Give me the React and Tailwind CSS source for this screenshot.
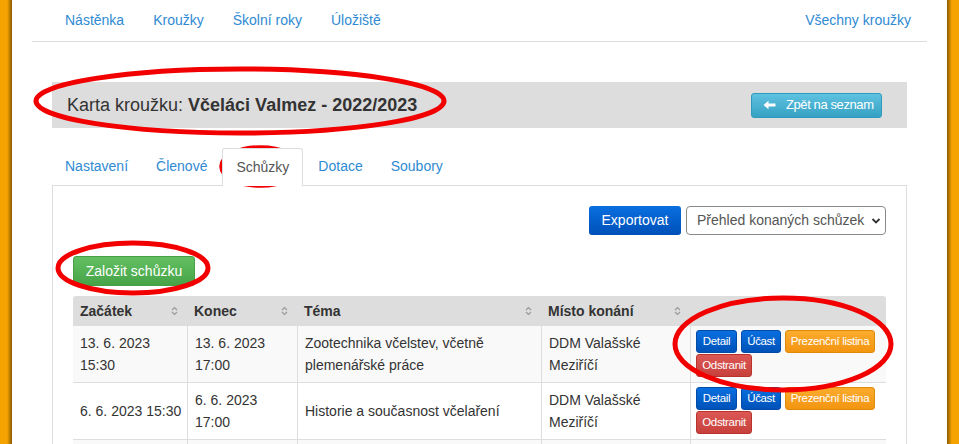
import React from "react";

const Sort = () => (
  <svg width="7" height="10" viewBox="0 0 7 10" className="shrink-0">
    <path d="M1 4 L3.5 1.5 L6 4" fill="none" stroke="#9a9a9a" strokeWidth="1.2" />
    <path d="M1 6 L3.5 8.5 L6 6" fill="none" stroke="#9a9a9a" strokeWidth="1.2" />
  </svg>
);

const XBtn = ({ children, kind, w }) => {
  const cls = {
    blue: "bg-gradient-to-b from-[#0a6fe0] to-[#0052b8] border-[#004aa8]",
    orange: "bg-gradient-to-b from-[#fbab2c] to-[#f3950f] border-[#e08a0a]",
    red: "bg-gradient-to-b from-[#dc5854] to-[#c7403c] border-[#b8322e]",
  }[kind];
  return (
    <span className={`inline-flex items-center justify-center h-[23px] ${w} rounded-[3px] border text-white text-[11.5px] tracking-[-0.35px] leading-none ${cls}`}>
      {children}
    </span>
  );
};

const Actions = () => (
  <div className="flex flex-wrap gap-x-[4px] gap-y-[1px] pt-[4px] pb-[4px] px-[5px]">
    <XBtn kind="blue" w="w-[41px]">Detail</XBtn>
    <XBtn kind="blue" w="w-[40px]">Účast</XBtn>
    <XBtn kind="orange" w="w-[90px]">Prezenční listina</XBtn>
    <XBtn kind="red" w="w-[56px]">Odstranit</XBtn>
  </div>
);

export default function App() {
  const rows = [
    ["13. 6. 2023 15:30", "13. 6. 2023 17:00", "Zootechnika včelstev, včetně plemenářské práce", "DDM Valašské Meziříčí"],
    ["6. 6. 2023 15:30", "6. 6. 2023 17:00", "Historie a současnost včelaření", "DDM Valašské Meziříčí"],
    ["30. 5. 2023 15:30", "30. 5. 2023 17:00", "Ošetřování včelstev", "DDM Valašské Meziříčí"],
  ];
  const widths = ["w-[114px]", "w-[110px]", "w-[244px]", "w-[149px]", "w-[196px]"];
  return (
    <div className="relative flex w-[959px] h-[444px] overflow-hidden bg-white text-[14px] text-[#333]" style={{ fontFamily: '"Liberation Sans", Arial, sans-serif' }}>
      <div className="w-[12px] shrink-0 bg-gradient-to-r from-[#f5a300] from-60% to-[#8a5a00]" />
      <div className="flex-1 px-[20px]">
        {/* nav */}
        <div className="h-[42px] border-b border-[#dcdcdc] flex items-center justify-between pl-[33px] pr-[16px] pb-[1px]">
          <div className="flex gap-[29px] text-[#2f8ad3]">
            <span>Nástěnka</span>
            <span>Kroužky</span>
            <span>Školní roky</span>
            <span>Úložiště</span>
          </div>
          <span className="text-[#2f8ad3]">Všechny kroužky</span>
        </div>
        <div className="px-[20px]">
          {/* header */}
          <div className="mt-[40px] h-[46px] bg-[#dddddd] flex items-center justify-between pl-[15px] pr-[25px]">
            <div className="text-[18px] text-[#333]">
              Karta kroužku: <b>Včeláci Valmez - 2022/2023</b>
            </div>
            <span className="inline-flex items-center h-[25px] w-[131px] rounded-[3px] border border-[#2e9bbd] bg-gradient-to-b from-[#5ec2e0] to-[#35a1c3] text-white text-[13px] tracking-[-0.4px] pl-[11px]">
              <svg width="14" height="10" viewBox="0 0 14 10" className="mr-[9px]">
                <path d="M0.5 5 L5.5 0.8 L5.5 3.4 L12.5 3.4 L12.5 6.6 L5.5 6.6 L5.5 9.2 Z" fill="#fff" />
              </svg>
              Zpět na seznam
            </span>
          </div>
          {/* tabs */}
          <div className="mt-[20px] flex items-end gap-[2px] text-[#2f8ad3]">
            <span className="h-[37px] px-[13px] flex items-center">Nastavení</span>
            <span className="h-[37px] px-[13px] flex items-center">Členové</span>
            <span className="h-[38px] px-[13px] flex items-center border border-b-0 border-[#dddddd] rounded-t-[3px] bg-white text-[#555] -mb-px relative z-10">Schůzky</span>
            <span className="h-[37px] px-[13px] flex items-center">Dotace</span>
            <span className="h-[37px] px-[13px] flex items-center">Soubory</span>
          </div>
          <div className="border border-[#dddddd] border-b-0 h-[300px] px-[20px] pt-[20px]">
            <div className="flex justify-end gap-[5px]">
              <span className="inline-flex items-center justify-center h-[29px] w-[92px] rounded-[3px] bg-gradient-to-b from-[#0a6fe0] to-[#0050b8] text-white">Exportovat</span>
              <span className="inline-flex items-center justify-between h-[29px] w-[200px] rounded-[4px] border border-[#8a8a8a] pl-[10px] pr-[4px] text-[#555]">
                Přehled konaných schůzek
                <svg width="10" height="8" viewBox="0 0 10 8"><path d="M1.5 2 L5 5.5 L8.5 2" fill="none" stroke="#333" strokeWidth="1.8" /></svg>
              </span>
            </div>
            <div className="mt-[21px]">
              <span className="inline-flex items-center justify-center h-[30px] w-[122px] rounded-[3px] border border-[#46a046] bg-gradient-to-b from-[#62c062] to-[#47a347] text-white">Založit schůzku</span>
            </div>
            <div className="mt-[10px] w-[813px]">
              <div className="flex h-[30px] bg-[#dddddd] rounded-t-[3px] font-bold">
                {["Začátek", "Konec", "Téma", "Místo konání", ""].map((h, i) => (
                  <div key={i} className={`${widths[i]} flex items-center justify-between pl-[7px] pr-[9px]`}>
                    <span>{h}</span>
                    {i < 4 && <Sort />}
                  </div>
                ))}
              </div>
              {rows.map((r, ri) => (
                <div key={ri} className={`flex border-b border-[#dddddd] ${ri % 2 === 0 ? "bg-[#f9f9f9]" : "bg-white"}`}>
                  {r.map((c, ci) => (
                    <div key={ci} className={`${widths[ci]} border-l border-[#dddddd] first:border-l-0 pl-[7px] pr-[3px] py-[6px] leading-[22px] flex items-center`}>
                      <span>{c}</span>
                    </div>
                  ))}
                  <div className={`${widths[4]} border-l border-[#dddddd]`}>
                    <Actions />
                  </div>
                </div>
              ))}
            </div>
          </div>
        </div>
      </div>
      <div className="w-[12px] shrink-0 bg-gradient-to-r from-[#8a5a00] to-[#f5a300] to-40%" />
      {/* annotation ellipses */}
      <svg className="absolute inset-0 pointer-events-none" width="959" height="444">
        <g fill="none" stroke="#f20000" strokeWidth="5">
          <ellipse cx="240" cy="101" rx="204" ry="32" />
          <ellipse cx="260.5" cy="166.5" rx="39" ry="19" strokeWidth="4.5" />
          <ellipse cx="133" cy="268" rx="75" ry="25" />
          <ellipse cx="783" cy="344" rx="108" ry="46" />
        </g>
      </svg>
    </div>
  );
}
